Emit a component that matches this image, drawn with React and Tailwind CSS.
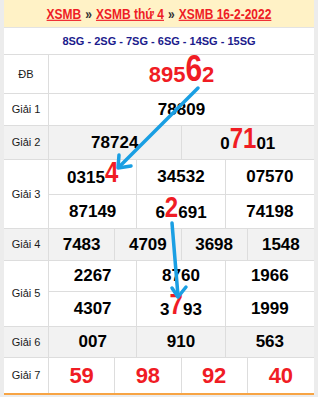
import React from "react";

const Big = ({ children, size = "text-[24px]" }) => (
  <span className={`inline-block leading-none origin-bottom scale-y-[1.22] text-[#f01c24] ${size}`}>{children}</span>
);

const Cell = ({ children, className = "" }) => (
  <div className={`flex items-center justify-center font-bold text-[17px] text-black ${className}`}>{children}</div>
);

const Label = ({ children, bg = "bg-white" }) => (
  <div className={`w-[45px] shrink-0 border-r border-[#dddddd] flex items-center justify-center text-[11px] text-[#1a1a1a] ${bg}`}>{children}</div>
);

export default function App() {
  return (
    <div className="relative w-[318px] h-[397px] bg-[#ececec] font-[Liberation_Sans,Arial,sans-serif] overflow-hidden">
      <div className="ml-[4px] w-[310px] bg-white">
        {/* header */}
        <div className="h-[28px] bg-[#fff2c6] border-b border-[#e3e3e3] flex items-center justify-center text-[12px] font-bold">
          <span className="inline-block scale-y-[1.15] text-[#ee1c25] underline">XSMB</span>
          <span className="inline-block scale-y-[1.15] text-[#333] mx-[4px]">»</span>
          <span className="inline-block scale-y-[1.15] text-[#ee1c25] underline">XSMB thứ 4</span>
          <span className="inline-block scale-y-[1.15] text-[#333] mx-[4px]">»</span>
          <span className="inline-block scale-y-[1.15] text-[#ee1c25] underline">XSMB 16-2-2022</span>
        </div>
        {/* 8SG */}
        <div className="h-[27px] border-b border-[#dddddd] flex items-center justify-center text-[11px] font-bold text-[#1b1b8c]">
          8SG - 2SG - 7SG - 6SG - 14SG - 15SG
        </div>
        {/* DB */}
        <div className="h-[39px] border-b border-[#dddddd] flex">
          <Label>ĐB</Label>
          <Cell className="flex-1 !text-[22px] !text-[#f01c24]">
            <span>895<Big size="text-[30px]">6</Big>2</span>
          </Cell>
        </div>
        {/* G1 */}
        <div className="h-[32px] border-b border-[#dddddd] flex">
          <Label>Giải 1</Label>
          <Cell className="flex-1">78809</Cell>
        </div>
        {/* G2 */}
        <div className="h-[34px] border-b border-[#dddddd] flex bg-[#f2f2f2]">
          <Label bg="bg-[#f2f2f2]">Giải 2</Label>
          <div className="flex-1 grid grid-cols-2 divide-x divide-[#dddddd]">
            <Cell>78724</Cell>
            <Cell><span>0<Big>71</Big>01</span></Cell>
          </div>
        </div>
        {/* G3 */}
        <div className="h-[69px] border-b border-[#dddddd] flex">
          <Label>Giải 3</Label>
          <div className="flex-1 flex flex-col">
            <div className="h-[35px] border-b border-[#dddddd] grid grid-cols-3 divide-x divide-[#dddddd]">
              <Cell><span>0315<Big>4</Big></span></Cell>
              <Cell>34532</Cell>
              <Cell>07570</Cell>
            </div>
            <div className="flex-1 grid grid-cols-3 divide-x divide-[#dddddd]">
              <Cell>87149</Cell>
              <Cell><span>6<Big>2</Big>691</span></Cell>
              <Cell>74198</Cell>
            </div>
          </div>
        </div>
        {/* G4 */}
        <div className="h-[32px] border-b border-[#dddddd] flex bg-[#f2f2f2]">
          <Label bg="bg-[#f2f2f2]">Giải 4</Label>
          <div className="flex-1 grid grid-cols-4 divide-x divide-[#dddddd]">
            <Cell>7483</Cell>
            <Cell>4709</Cell>
            <Cell>3698</Cell>
            <Cell>1548</Cell>
          </div>
        </div>
        {/* G5 */}
        <div className="h-[66px] border-b border-[#dddddd] flex">
          <Label>Giải 5</Label>
          <div className="flex-1 flex flex-col">
            <div className="h-[31px] border-b border-[#dddddd] grid grid-cols-3 divide-x divide-[#dddddd]">
              <Cell>2267</Cell>
              <Cell>8760</Cell>
              <Cell>1966</Cell>
            </div>
            <div className="flex-1 grid grid-cols-3 divide-x divide-[#dddddd]">
              <Cell>4307</Cell>
              <Cell><span>3<Big>7</Big>93</span></Cell>
              <Cell>1999</Cell>
            </div>
          </div>
        </div>
        {/* G6 */}
        <div className="h-[31px] border-b border-[#dddddd] flex bg-[#f2f2f2]">
          <Label bg="bg-[#f2f2f2]">Giải 6</Label>
          <div className="flex-1 grid grid-cols-3 divide-x divide-[#dddddd]">
            <Cell>007</Cell>
            <Cell>910</Cell>
            <Cell>563</Cell>
          </div>
        </div>
        {/* G7 */}
        <div className="h-[37px] border-b-2 border-b-[#f7a444] flex">
          <Label>Giải 7</Label>
          <div className="flex-1 grid grid-cols-4 divide-x divide-[#dddddd]">
            <Cell className="!text-[22px] !text-[#f01c24]">59</Cell>
            <Cell className="!text-[22px] !text-[#f01c24]">98</Cell>
            <Cell className="!text-[22px] !text-[#f01c24]">92</Cell>
            <Cell className="!text-[22px] !text-[#f01c24]">40</Cell>
          </div>
        </div>
      </div>
      <svg className="absolute inset-0 pointer-events-none" width="318" height="397" viewBox="0 0 318 397">
        <g stroke="#1a9fe3" strokeWidth="3.5" strokeLinecap="round" strokeLinejoin="round" fill="none">
          <line x1="198" y1="88" x2="119" y2="167" />
          <polyline points="119,155 118,168 131,166" />
          <line x1="172" y1="223" x2="178" y2="296" />
          <polyline points="172,288 178,297 186,287" />
        </g>
      </svg>
    </div>
  );
}
